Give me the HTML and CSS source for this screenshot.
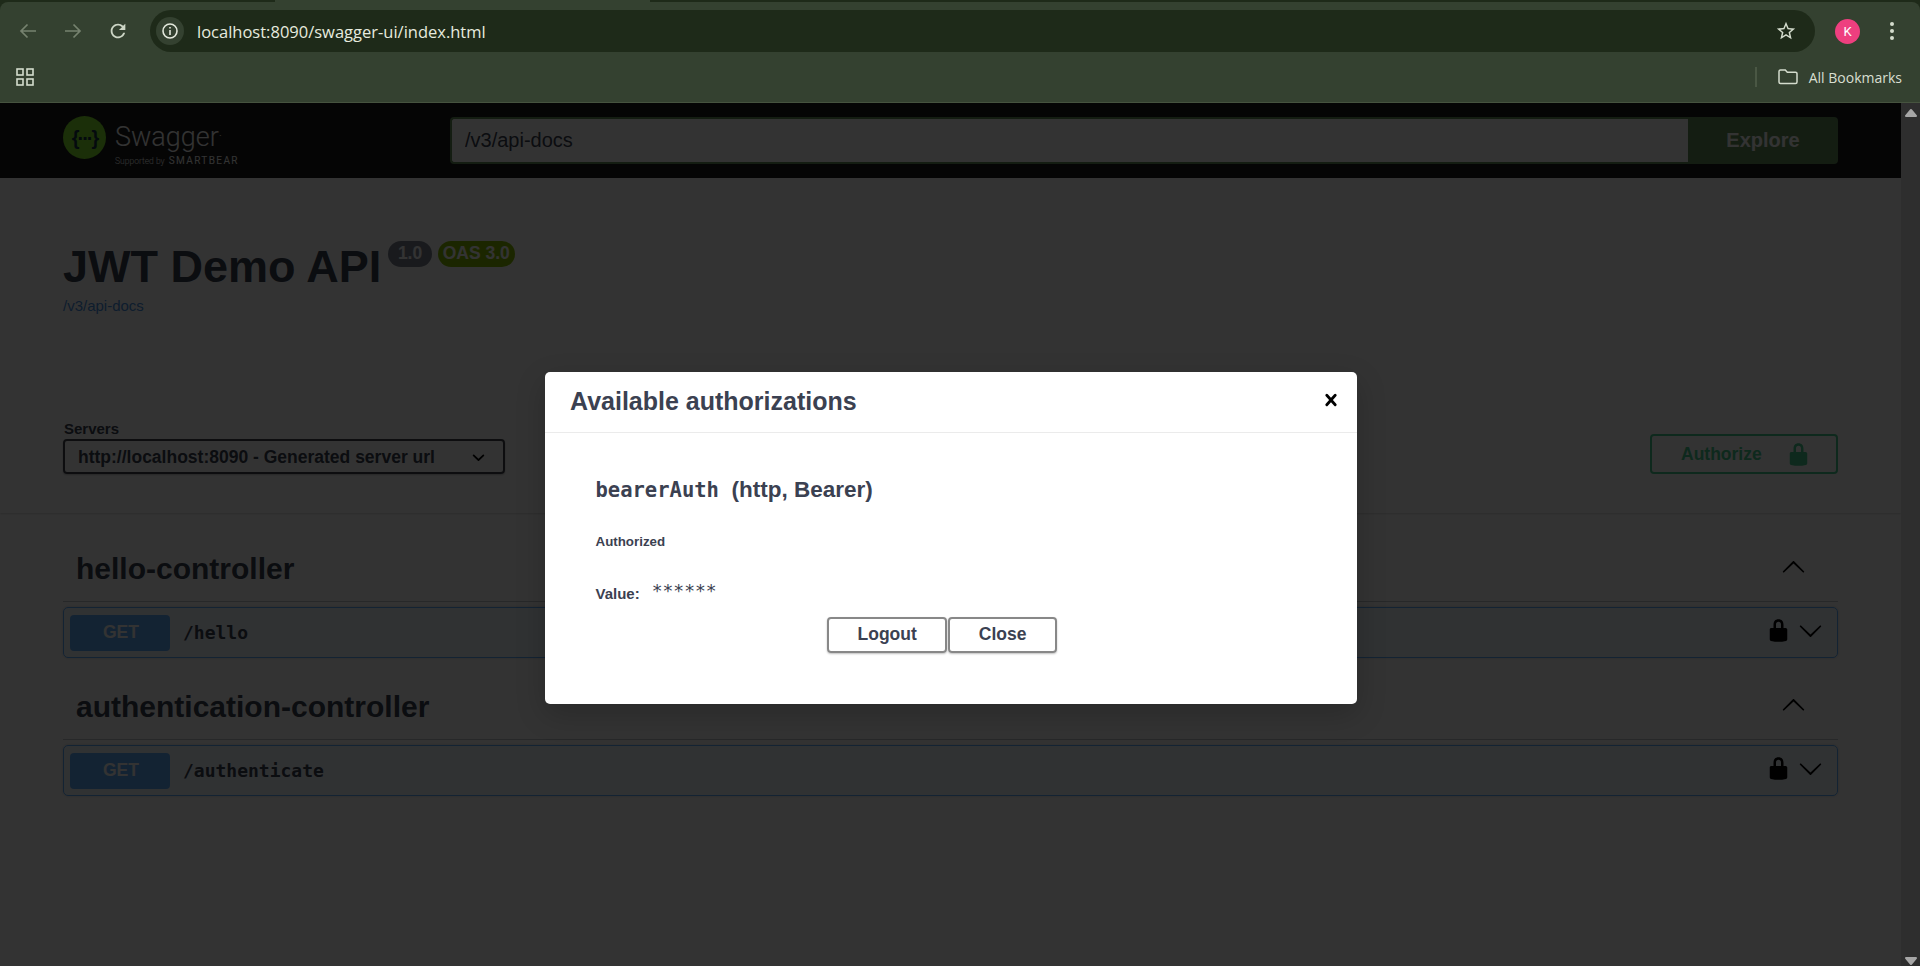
FILE: index.html
```html
<!DOCTYPE html>
<html lang="en">
<head>
  <meta charset="UTF-8">
  <title>Swagger UI</title>
  <link rel="stylesheet" href="styles.css">
</head>
<body>
  <!-- Browser chrome -->
  <div class="tabstrip"><div class="active-tab"></div></div>
  <div class="chrome">
    <div class="toolbar">
      <button class="nav-btn dim">
        <svg width="20" height="20" viewBox="0 0 20 20" fill="none" stroke="currentColor" stroke-width="1.7"><path d="M18 10H3M9.5 3.5L3 10l6.500 6.500"/></svg>
      </button>
      <button class="nav-btn dim">
        <svg width="20" height="20" viewBox="0 0 20 20" fill="none" stroke="currentColor" stroke-width="1.700"><path d="M2 10h15M10.500 3.500L17 10l-6.500 6.500"/></svg>
      </button>
      <button class="nav-btn">
        <svg width="22" height="22" viewBox="0 0 24 24" fill="currentColor"><path d="M17.650 6.350A7.958 7.958 0 0 0 12 4c-4.420 0-7.990 3.580-7.990 8s3.570 8 7.990 8c3.730 0 6.840-2.550 7.730-6h-2.080A5.990 5.990 0 0 1 12 18c-3.310 0-6-2.690-6-6s2.690-6 6-6c1.660 0 3.140.690 4.220 1.780L13 11h7V4l-2.350 2.350z"/></svg>
      </button>
      <div class="omnibox">
        <span class="site-info">
          <svg width="18" height="18" viewBox="0 0 18 18" fill="none" stroke="currentColor" stroke-width="1.600"><circle cx="9" cy="9" r="7"/><path d="M9 8v5M9 5v1.600"/></svg>
        </span>
        <span class="url">localhost:8090/swagger-ui/index.html</span>
        <svg class="star" width="22" height="22" viewBox="0 0 24 24" fill="currentColor"><path d="M22 9.240l-7.190-.620L12 2 9.190 8.630 2 9.240l5.460 4.730L5.820 21 12 17.270 18.180 21l-1.630-7.030L22 9.240zM12 15.400l-3.760 2.270 1-4.280-3.320-2.880 4.380-.380L12 6.100l1.710 4.040 4.380.380-3.320 2.880 1 4.280L12 15.400z"/></svg>
      </div>
      <span class="avatar">K</span>
      <span class="menu-dots"><i></i><i></i><i></i></span>
    </div>
    <div class="bookmarks">
      <svg class="apps" width="18" height="18" viewBox="0 0 18 18" fill="none" stroke="currentColor" stroke-width="1.600"><rect x="1" y="1" width="6" height="6"/><rect x="11" y="1" width="6" height="6"/><rect x="1" y="11" width="6" height="6"/><rect x="11" y="11" width="6" height="6"/></svg>
      <span class="bm-sep"></span>
      <svg class="folder" width="20" height="16" viewBox="0 0 20 16" fill="none" stroke="currentColor" stroke-width="1.500"><path d="M1 2.500a1.500 1.500 0 0 1 1.500-1.500h4.800l2 2.200h8.200a1.500 1.500 0 0 1 1.500 1.500v8.300a1.500 1.500 0 0 1-1.500 1.500h-15A1.500 1.500 0 0 1 1 13z"/></svg>
      <span class="bm-label">All Bookmarks</span>
    </div>
  </div>

  <div class="viewport">
    <div class="page">
      <!-- Swagger top bar -->
      <div class="topbar">
        <div class="logo">
          <svg class="logo-mark" width="43" height="43" viewBox="0 0 43 43">
            <circle cx="21.500" cy="21.500" r="21.500" fill="#85ea2d"/>
            <text x="21.500" y="28.500" text-anchor="middle" class="logo-braces">{···}</text>
          </svg>
          <div class="logo-text">
            <span class="logo-name">Swagger<sup>.</sup></span>
            <span class="logo-sub">Supported by <b>SMARTBEAR</b></span>
          </div>
        </div>
        <form class="download-url">
          <input type="text" value="/v3/api-docs">
          <button type="button">Explore</button>
        </form>
      </div>

      <!-- API info -->
      <div class="info">
        <div class="title-row">
          <h2>JWT Demo API</h2>
          <span class="stamp version">1.0</span>
          <span class="stamp oas">OAS 3.0</span>
        </div>
        <a class="spec-link" href="#">/v3/api-docs</a>
      </div>

      <!-- Servers + authorize -->
      <div class="schemes">
        <div class="servers">
          <span class="servers-label">Servers</span>
          <div class="select">
            <span>http://localhost:8090 - Generated server url</span>
            <svg width="25" height="25" viewBox="0 0 20 20"><path d="M13.418 7.859a.695.695 0 0 1 .978 0 .68.68 0 0 1 0 .969l-3.908 3.830a.697.697 0 0 1-.979 0l-3.908-3.830a.68.68 0 0 1 0-.969.695.695 0 0 1 .978 0L10 11l3.418-3.141z"/></svg>
          </div>
        </div>
        <button class="authorize">
          <span>Authorize</span>
          <svg width="25" height="25" viewBox="0 0 20 20" fill="currentColor"><path d="M15.800 8H14V5.600C14 2.703 12.665 1 10 1 7.334 1 6 2.703 6 5.600V8H4c-.553 0-1 .646-1 1.199V17c0 .549.428 1.139.951 1.307l1.197.387C5.672 18.861 6.550 19 7.100 19h5.800c.549 0 1.428-.139 1.951-.307l1.196-.387c.524-.167.953-.757.953-1.306V9.199C17 8.646 16.352 8 15.800 8zM12 8H8V5.199C8 3.754 8.797 3 10 3c1.203 0 2 .754 2 2.199V8z"/></svg>
        </button>
      </div>

      <!-- Tags and operations -->
      <div class="tags">
        <section class="tag">
          <div class="tag-head">
            <h3>hello-controller</h3>
            <svg class="chev up" width="25" height="25" viewBox="0 0 20 20"><path d="M17.418 6.109c.272-.268.709-.268.979 0s.271.701 0 .969l-7.908 7.830c-.27.268-.707.268-.979 0l-7.908-7.830c-.27-.268-.27-.701 0-.969.271-.268.709-.268.979 0L10 13.250l7.418-7.141z"/></svg>
          </div>
          <div class="opblock">
            <span class="method">GET</span>
            <span class="path">/hello</span>
            <svg class="op-lock" width="25" height="25" viewBox="0 0 20 20"><path d="M15.800 8H14V5.600C14 2.703 12.665 1 10 1 7.334 1 6 2.703 6 5.600V8H4c-.553 0-1 .646-1 1.199V17c0 .549.428 1.139.951 1.307l1.197.387C5.672 18.861 6.550 19 7.100 19h5.800c.549 0 1.428-.139 1.951-.307l1.196-.387c.524-.167.953-.757.953-1.306V9.199C17 8.646 16.352 8 15.800 8zM12 8H8V5.199C8 3.754 8.797 3 10 3c1.203 0 2 .754 2 2.199V8z"/></svg>
            <svg class="chev" width="25" height="25" viewBox="0 0 20 20"><path d="M17.418 6.109c.272-.268.709-.268.979 0s.271.701 0 .969l-7.908 7.830c-.27.268-.707.268-.979 0l-7.908-7.830c-.27-.268-.27-.701 0-.969.271-.268.709-.268.979 0L10 13.250l7.418-7.141z"/></svg>
          </div>
        </section>
        <section class="tag">
          <div class="tag-head">
            <h3>authentication-controller</h3>
            <svg class="chev up" width="25" height="25" viewBox="0 0 20 20"><path d="M17.418 6.109c.272-.268.709-.268.979 0s.271.701 0 .969l-7.908 7.830c-.27.268-.707.268-.979 0l-7.908-7.830c-.27-.268-.27-.701 0-.969.271-.268.709-.268.979 0L10 13.250l7.418-7.141z"/></svg>
          </div>
          <div class="opblock">
            <span class="method">GET</span>
            <span class="path">/authenticate</span>
            <svg class="op-lock" width="25" height="25" viewBox="0 0 20 20"><path d="M15.800 8H14V5.600C14 2.703 12.665 1 10 1 7.334 1 6 2.703 6 5.600V8H4c-.553 0-1 .646-1 1.199V17c0 .549.428 1.139.951 1.307l1.197.387C5.672 18.861 6.550 19 7.100 19h5.800c.549 0 1.428-.139 1.951-.307l1.196-.387c.524-.167.953-.757.953-1.306V9.199C17 8.646 16.352 8 15.800 8zM12 8H8V5.199C8 3.754 8.797 3 10 3c1.203 0 2 .754 2 2.199V8z"/></svg>
            <svg class="chev" width="25" height="25" viewBox="0 0 20 20"><path d="M17.418 6.109c.272-.268.709-.268.979 0s.271.701 0 .969l-7.908 7.830c-.27.268-.707.268-.979 0l-7.908-7.830c-.27-.268-.27-.701 0-.969.271-.268.709-.268.979 0L10 13.250l7.418-7.141z"/></svg>
          </div>
        </section>
      </div>

      <!-- Authorization dialog over the dimmed page -->
      <div class="backdrop">
        <div class="modal">
          <div class="modal-head">
            <h3>Available authorizations</h3>
            <svg width="24" height="24" viewBox="0 0 20 20"><path d="M14.348 14.849a1.200 1.200 0 0 1-1.697 0L10 11.819l-2.651 3.029a1.200 1.200 0 1 1-1.697-1.697l2.758-3.150-2.759-3.152a1.200 1.200 0 1 1 1.697-1.697L10 8.183l2.651-3.031a1.200 1.200 0 1 1 1.697 1.697l-2.758 3.152 2.758 3.150a1.200 1.200 0 0 1 0 1.698"/></svg>
          </div>
          <div class="modal-body">
            <h4><code>bearerAuth</code><span class="scheme-type">(http, Bearer)</span></h4>
            <h6>Authorized</h6>
            <div class="value-row">
              <label>Value:</label>
              <code>******</code>
            </div>
            <div class="auth-btns">
              <button>Logout</button>
              <button>Close</button>
            </div>
          </div>
        </div>
      </div>
    </div>

    <div class="scrollbar">
      <svg width="14" height="10" viewBox="0 0 14 10"><path d="M7 2L12 8H2z" fill="currentColor" stroke="currentColor" stroke-width="2" stroke-linejoin="round"/></svg>
      <svg width="14" height="10" viewBox="0 0 14 10"><path d="M7 8L12 2H2z" fill="currentColor" stroke="currentColor" stroke-width="2" stroke-linejoin="round"/></svg>
    </div>
  </div>
</body>
</html>
```

FILE: styles.css
```css
* {
  box-sizing: border-box;
}

html, body {
  height: 100%;
}

body {
  margin: 0;
  display: flex;
  flex-direction: column;
  overflow: hidden;
  background-color: #1e2a19;
  font-family: "Liberation Sans", Arial, sans-serif;
  color: #3b4151;
}

button {
  font-family: inherit;
  cursor: pointer;
}

/* browser chrome */
.tabstrip {
  height: 2px;
  flex: none;
}

.active-tab {
  height: 2px;
  width: 375px;
  margin-left: 275px;
  background-color: #344130;
}

.chrome {
  flex: none;
  height: 101px;
  background-color: #344130;
  border-bottom: 1px solid #46533f;
  border-radius: 8px 8px 0 0;
  color: #d4dccd;
}

.toolbar {
  display: flex;
  align-items: center;
  height: 58px;
  padding: 0 18px 0 5px;
}

.nav-btn {
  width: 45px;
  height: 42px;
  padding: 0;
  border: none;
  background: none;
  color: #cdd6c6;
  display: flex;
  align-items: center;
  justify-content: center;
}

.nav-btn.dim {
  color: #76826f;
}

.omnibox {
  flex: 1;
  height: 42px;
  margin-left: 10px;
  padding: 0 18px 0 6px;
  display: flex;
  align-items: center;
  background-color: #1e2a19;
  border-radius: 21px;
}

.site-info {
  width: 28px;
  height: 28px;
  border-radius: 50%;
  background-color: #344130;
  color: #e3e8dc;
  display: flex;
  align-items: center;
  justify-content: center;
}

.url {
  flex: 1;
  margin-left: 13px;
  font-family: "Open Sans", sans-serif;
  font-size: 16.5px;
  color: #e6ebdf;
}

.star {
  color: #d4dccd;
}

.avatar {
  width: 25px;
  height: 25px;
  margin-left: 20px;
  border-radius: 50%;
  background-color: #ee3f7f;
  color: #fff;
  font-family: Roboto, sans-serif;
  font-size: 13px;
  line-height: 25px;
  text-align: center;
}

.menu-dots {
  width: 20px;
  margin-left: 22px;
  display: flex;
  flex-direction: column;
  align-items: center;
  gap: 3px;
}

.menu-dots i {
  width: 4px;
  height: 4px;
  border-radius: 50%;
  background-color: #d4dccd;
}

.bookmarks {
  display: flex;
  align-items: center;
  height: 42px;
  padding: 0 18px 8px 16px;
}

.bm-sep {
  width: 2px;
  height: 20px;
  margin-left: auto;
  background-color: #4a5744;
}

.folder {
  margin-left: 21px;
}

.bm-label {
  margin-left: 11px;
  font-family: "Open Sans", sans-serif;
  font-size: 14px;
  color: #d8dfd1;
}

/* page area */
.viewport {
  flex: 1;
  display: flex;
  min-height: 0;
}

.page {
  flex: 1;
  position: relative;
  background-color: #fff;
  overflow: hidden;
}

.scrollbar {
  width: 19px;
  flex: none;
  background-color: #2e2e2e;
  color: #a6a6a6;
  display: flex;
  flex-direction: column;
  justify-content: space-between;
  align-items: center;
  padding: 5px 0 0;
}

.topbar {
  height: 75px;
  padding: 14px 63px;
  display: flex;
  background-color: #1b1b1b;
}

.logo {
  width: 387px;
  display: flex;
  align-items: flex-start;
  color: #fff;
}

.logo-mark {
  margin-top: -1px;
}

.logo-braces {
  font-family: "Liberation Sans", sans-serif;
  font-size: 20px;
  font-weight: bold;
  fill: #173647;
  letter-spacing: -2px;
}

.logo-text {
  margin: 4px 0 0 9px;
  display: flex;
  flex-direction: column;
}

.logo-name {
  font-family: Roboto, sans-serif;
  font-weight: 300;
  font-size: 27px;
  line-height: 32px;
}

.logo-name sup {
  font-size: 12px;
  line-height: 0;
}

.logo-sub {
  margin-top: 1.5px;
  font-family: Roboto, sans-serif;
  font-weight: 300;
  font-size: 8.5px;
  line-height: 12px;
  white-space: nowrap;
}

.logo-sub b {
  margin-left: 2px;
  font-weight: 400;
  font-size: 10px;
  letter-spacing: 1.4px;
}

.download-url {
  flex: 1;
  display: flex;
  margin: 0;
}

.download-url input {
  flex: 1;
  padding: 0 13px;
  border: 2px solid #64905a;
  border-right: none;
  border-radius: 4px 0 0 4px;
  font-family: inherit;
  font-size: 20px;
  color: #3b4151;
  background-color: #fff;
}

.download-url button {
  width: 150px;
  border: none;
  border-radius: 0 4px 4px 0;
  background-color: #64905a;
  color: #fff;
  font-size: 20px;
  font-weight: bold;
}

.info {
  padding: 63px 63px 0;
}

.title-row {
  display: flex;
  align-items: flex-start;
}

.title-row h2 {
  margin: 0;
  font-size: 45px;
  line-height: 52px;
}

.stamp {
  height: 26px;
  padding: 0 9.5px;
  border-radius: 13px;
  font-size: 17.5px;
  font-weight: bold;
  line-height: 25px;
  color: #fff;
}

.version {
  margin-left: 7px;
  background-color: #7d8492;
}

.oas {
  margin-left: 6px;
  padding: 0 5px;
  background-color: #89bf04;
}

.spec-link {
  display: block;
  margin-top: 3px;
  font-size: 15px;
  line-height: 20px;
  color: #4990e2;
  text-decoration: none;
}

.schemes {
  display: flex;
  justify-content: space-between;
  align-items: flex-end;
  padding: 103px 63px 39px;
  background-color: #fff;
  box-shadow: 0 1px 2px 0 rgba(0, 0, 0, 0.15);
}

.servers-label {
  display: block;
  margin-left: 1px;
  font-size: 15px;
  font-weight: bold;
  line-height: 20px;
}

.select {
  width: 442px;
  height: 35px;
  padding: 1px 12px 0 13px;
  display: flex;
  align-items: center;
  justify-content: space-between;
  border: 2px solid #41444e;
  border-radius: 4px;
  font-size: 17.5px;
  font-weight: bold;
  box-shadow: 0 1px 2px 0 rgba(0, 0, 0, 0.25);
}

.select svg {
  fill: #000;
}

.authorize {
  width: 188px;
  height: 40px;
  padding: 1px 25px 0 29px;
  display: flex;
  align-items: center;
  justify-content: space-between;
  border: 2px solid #49cc90;
  border-radius: 4px;
  background: none;
  color: #49cc90;
  font-size: 17.5px;
  font-weight: bold;
}

.tags {
  padding: 35px 63px 0;
}

.tag {
  margin-bottom: 28px;
}

.tag-head {
  height: 54px;
  padding: 0 32px 12px 13px;
  display: flex;
  align-items: center;
  justify-content: space-between;
  border-bottom: 1px solid rgba(59, 65, 81, 0.3);
}

.tag-head h3 {
  margin: 0;
  font-size: 30px;
  line-height: 40px;
}

.chev.up {
  margin-bottom: 3px;
  transform: rotate(180deg);
}

.opblock {
  height: 51px;
  margin-top: 5px;
  padding: 0 14px 0 6px;
  display: flex;
  align-items: center;
  background-color: rgba(97, 175, 254, 0.1);
  border: 1px solid #61affe;
  border-radius: 5px;
  box-shadow: 0 0 3px rgba(0, 0, 0, 0.19);
}

.method {
  width: 100px;
  height: 36px;
  padding-left: 2px;
  border-radius: 4px;
  background-color: #61affe;
  color: #fff;
  font-size: 17.5px;
  font-weight: bold;
  line-height: 35px;
  text-align: center;
}

.path {
  flex: 1;
  margin-left: 13px;
  font-family: "DejaVu Sans Mono", monospace;
  font-size: 18px;
  font-weight: bold;
}

.op-lock, .opblock .chev {
  margin-bottom: 5px;
}

.opblock .chev {
  margin-left: 7.5px;
}

/* dialog */
.backdrop {
  position: absolute;
  top: 0;
  right: 0;
  bottom: 0;
  left: 0;
  padding-top: 269px;
  display: flex;
  justify-content: center;
  align-items: flex-start;
  background-color: rgba(0, 0, 0, 0.8);
}

.modal {
  width: 812px;
  height: 332px;
  background-color: #fff;
  border-radius: 5px;
  box-shadow: 0 10px 30px 0 rgba(0, 0, 0, 0.2);
}

.modal-head {
  height: 61px;
  padding: 0 14px 2px 25.5px;
  display: flex;
  align-items: center;
  justify-content: space-between;
  border-bottom: 1px solid #ebebeb;
}

.modal-head h3 {
  margin: 0;
  font-size: 25px;
}

.modal-head svg {
  margin-bottom: 2px;
}

.modal-body {
  padding: 0 51px;
}

.modal-body h4 {
  margin: 42px 0 0;
  font-size: 22.5px;
  line-height: 30px;
}

.modal-body h4 code {
  font-family: "DejaVu Sans Mono", monospace;
  font-size: 20.5px;
}

.scheme-type {
  margin-left: 12.5px;
}

.modal-body h6 {
  margin: 28px 0 0;
  font-size: 13.33px;
  line-height: 18px;
}

.value-row {
  margin-top: 32px;
  display: flex;
  align-items: center;
  gap: 12px;
  height: 20px;
}

.value-row label {
  font-size: 15px;
  font-weight: bold;
}

.value-row code {
  margin-top: -5px;
  font-family: "DejaVu Sans Mono", monospace;
  font-size: 18px;
}

.auth-btns {
  margin-top: 14px;
  padding-right: 17px;
  display: flex;
  justify-content: center;
  gap: 1px;
}

.auth-btns button {
  height: 36px;
  padding: 0 28.5px 1px;
  border: 2px solid #888;
  border-radius: 4px;
  background: none;
  color: #3b4151;
  font-size: 17.5px;
  font-weight: bold;
  box-shadow: 0 1px 2px rgba(0, 0, 0, 0.25);
}
```
